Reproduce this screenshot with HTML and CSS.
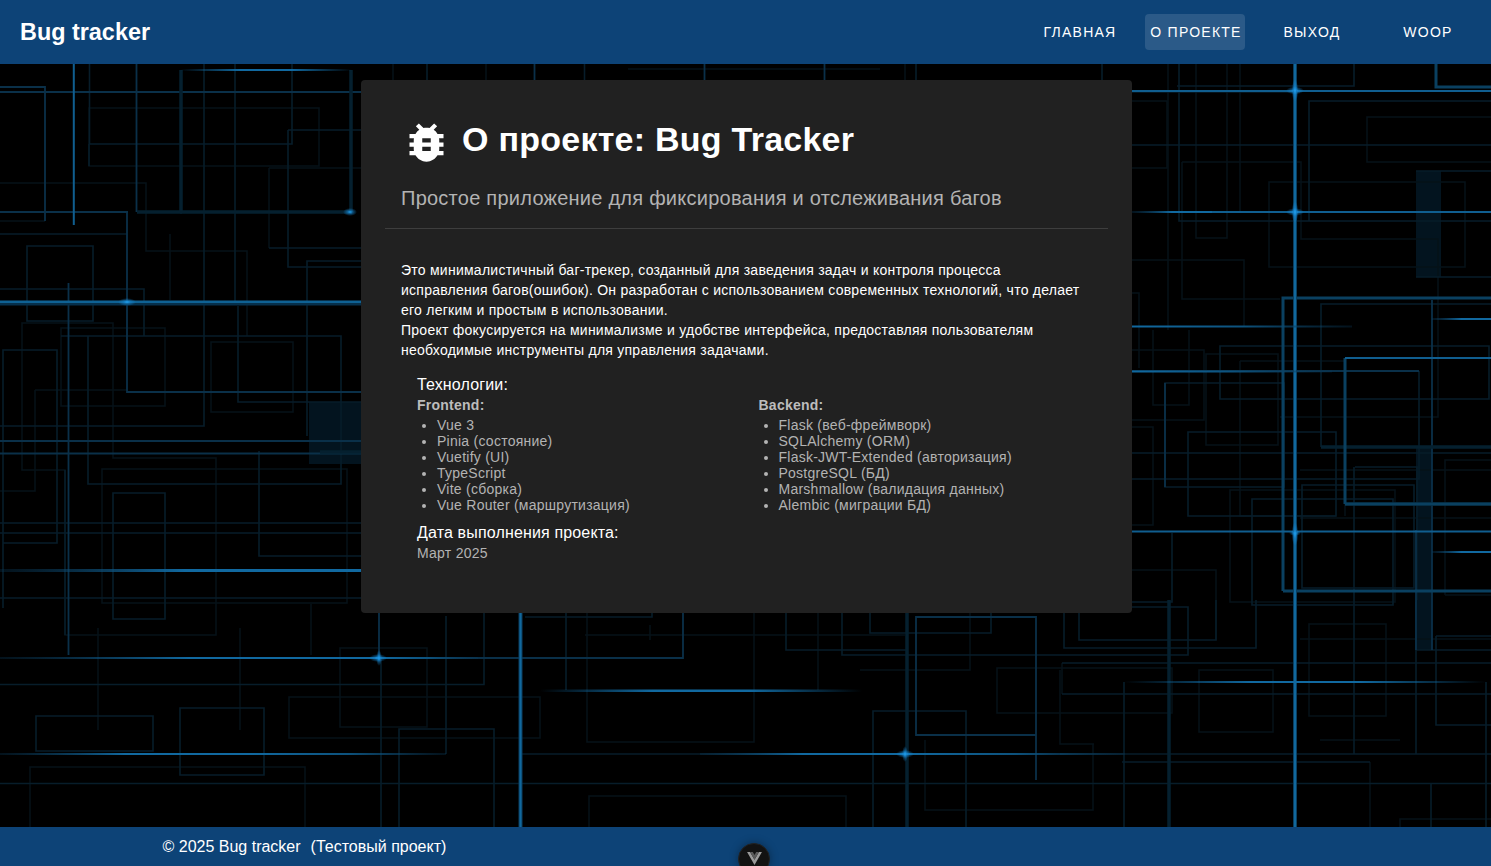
FILE: index.html
```html
<!DOCTYPE html>
<html lang="ru">
<head>
<meta charset="utf-8">
<title>Bug tracker</title>
<link rel="stylesheet" href="styles.css">
</head>
<body>
<div class="app">
<svg class="backdrop" viewBox="0 0 1491 866" preserveAspectRatio="none" aria-hidden="true">
  <defs>
    <linearGradient id="fadeBoth"><stop offset="0" stop-color="#0f6ca6" stop-opacity="0"/><stop offset=".35" stop-color="#1169a0"/><stop offset=".65" stop-color="#1169a0"/><stop offset="1" stop-color="#0f6ca6" stop-opacity="0"/></linearGradient>
    <linearGradient id="fadeIn"><stop offset="0" stop-color="#0b3c5c" stop-opacity=".3"/><stop offset=".5" stop-color="#1169a0"/><stop offset="1" stop-color="#1169a0"/></linearGradient>
    <linearGradient id="fadeOut"><stop offset="0" stop-color="#1169a0"/><stop offset=".5" stop-color="#0d527d"/><stop offset="1" stop-color="#0b3c5c" stop-opacity=".3"/></linearGradient>
    <radialGradient id="spark"><stop offset="0" stop-color="#22a4f4"/><stop offset=".4" stop-color="#1583cc" stop-opacity=".6"/><stop offset="1" stop-color="#1583cc" stop-opacity="0"/></radialGradient>
  </defs>

  <g class="block">
    <path d="M309 402h60v62h-60zM1416 171h25v106h-25zM1416 446h16v204h-16z"/>
  </g>

  <g class="trace faint">
    <path d="M89 108H319V166H89zM0 183H146V251H247V336M22 323H113V458H216V635H65V470H22zM61 328H165V406H61zM211 342H293V412H211z"/>
    <path d="M0 221H45M269 168H370M269 168V248M102 469H347V603H102zM340 648H427V727H340zM289 697H540V738H289zM30 827V767H305V827M311 604V655M35 390V491H0M35 390H127M170 234V300M98 628V730M240 628V730"/>
    <path d="M587 613V742H754V613M585 635H905M589 827V796H846V827M818 613V690M997 668H1172V713H997zM1199 670H1273V732H1199zM1309 624H1386V716H1309zM1300 639H1491M1400 827V819H1491M1062 663V694M1370 762V827"/>
    <path d="M1132 101H1167V168H1132M1269 182H1465V267H1269zM1132 260H1244V326M1196 64V238H1227V64M1240 64V212M1367 117H1500V162H1367zM1182 162H1301V239H1438V417H1280M1182 162V299H1280"/>
    <path d="M1132 350H1204V420H1132M1206 354H1278V445H1206zM1153 330V405H1189V330M1240 361H1345V516M1240 361V516H1336M1132 427H1153V525H1132M1230 490H1395V602H1230zM1132 570H1216V640M1445 595V460H1491M1445 595H1491M1139 368V293H1132M1300 470H1491M1300 518H1491"/>
    <path d="M650 625V640M860 670H970V613M1094 744H1060V670M1093 744V810H925V740M1168 64V330M1320 740H1400M393 64V82M486 64V82M905 64V82M628 69H880"/>
  </g>

  <g class="trace dim">
    <path d="M89.500 64V144H292V64M89 144V166M181 70V214M351 70V214M204 64V426H0M235 64V302M288 130H370M288 130V248M269 248H370M288 248V267H370M0 234H127M27 246H93V321H27zM0 289H144V336H61M307 436V261H370M88 336H341V484H88zM238 306V402H370M3 350H57V543H3zM3 543V608"/>
    <path d="M113 493H165V619H113zM259 451V556H370M0 523H370M0 533H370M0 598H370M0 684.500H484V613M36 716H153V751H36zM180 708H264V775H180zM0 783.500H1491M65 470V635"/>
    <path d="M446 616V754M381 660V827M399 827V729H494V827M566 613V690M525 617H652V613M786 613V650H906M842 613V655H1188V607H1132M870 613V633H991V613M873 827V711H966V827M520 754H905M1062 663H1491M1062 694H1491M1064 613V648H1256V600M1079 613V640H1216V600"/>
    <path d="M1124 682V827M1486 682V827M1122 762H1370M1354 467V754M1416 602V754M1436 636H1491M1436 636V725H1491M1416 650H1491M1431 783V827M1060 754H1491"/>
    <path d="M1177 86H1354V64M1179 64V221H1491M1132 145H1491M1309 221V101H1491M1416 171H1491M1416 277H1491M1321 447V304H1491M1321 447H1491M1220 346H1489V399H1220zM1165 383H1284V487H1165zM1188 432H1336V516H1188zM1132 453H1491M1132 479H1419V371M1302 485H1414V588H1302zM1252 499H1393V605H1252zM1355 467H1417V600M1172 533V602H1132"/>
    <path d="M427 64V82M584.500 64V82M916 64V82M1102 64V82M1132 92H1300"/>
  </g>

  <g class="trace mid">
    <path d="M0 87H45V221M0 92H370M136.500 64V212M0 212H128M127 212V392H370M68.500 283V655M0 441H370M0 453.500H370M379 613V660M378 658H683V613M916 617H1036V735H916zM1036 735V780M1132 371H1419M1432 300V650M1165 383V487M1416 530V650M534.500 64V82M704.500 64V82M824.500 64V82"/>
  </g>
  <g class="trace wide">
    <path d="M137 212H351M181 70V212M351 70V212M907 613V827M1169 600V827M1345 504H1491M320 452H370M1321 447H1491"/>
  </g>
  <g class="trace strong">
    <path d="M1283 591V298H1491M1283 591H1491M1345 504V358M1345 504H1491M1436 64V87H1491"/>
  </g>
  <g class="trace bright">
    <path d="M73.800 64V225M1132 91H1491M1200 212H1491M1132 531.500H1491M1345 358H1491"/>
  </g>
  <path class="beam" d="M520.500 613V827M1295 64V827"/>
  <path class="beam beam-core" d="M520.500 613V827M1295 64V827"/>
  <path class="under" d="M0 304H370"/>
  <g>
    <rect x="180" y="69" width="172" height="2" fill="url(#fadeBoth)"/>
    <rect x="0" y="300.500" width="370" height="2.500" fill="#0f6193"/>
    <rect x="0" y="569" width="370" height="3" fill="url(#fadeIn)"/>
    <rect x="0" y="657" width="378" height="2" fill="url(#fadeIn)"/>
    <rect x="378" y="657" width="100" height="2" fill="url(#fadeOut)"/>
    <rect x="0" y="753" width="250" height="2" fill="url(#fadeIn)"/>
    <rect x="250" y="753" width="196" height="2" fill="url(#fadeOut)"/>
    <rect x="540" y="689.500" width="322" height="2.500" fill="url(#fadeBoth)"/>
    <rect x="700" y="753" width="205" height="2" fill="url(#fadeIn)"/>
    <rect x="905" y="753" width="220" height="2" fill="url(#fadeOut)"/>
    <rect x="1124" y="681" width="362" height="2" fill="url(#fadeBoth)"/>
    <rect x="1132" y="211" width="80" height="2" fill="url(#fadeIn)"/>
    <rect x="1132" y="325.500" width="220" height="2" fill="url(#fadeOut)"/>
    <rect x="1132" y="370.500" width="200" height="2" fill="url(#fadeOut)"/>
    <rect x="1432" y="318" width="59" height="2" fill="url(#fadeIn)"/>
    <rect x="1432" y="551" width="59" height="2" fill="url(#fadeIn)"/>
  </g>
  <g fill="url(#spark)">
    <ellipse cx="127" cy="302" rx="9" ry="4"/><ellipse cx="350" cy="212" rx="7" ry="4"/><ellipse cx="378" cy="658" rx="9" ry="4"/><ellipse cx="379" cy="658" rx="3" ry="8"/><ellipse cx="905" cy="754" rx="9" ry="4"/><ellipse cx="905" cy="754" rx="3" ry="8"/><ellipse cx="1295" cy="90.500" rx="9" ry="4"/><ellipse cx="1295" cy="90.500" rx="3.500" ry="11"/><ellipse cx="1295" cy="212" rx="9" ry="4"/><ellipse cx="1295" cy="212" rx="3.500" ry="11"/><ellipse cx="1295" cy="533" rx="6" ry="3"/><ellipse cx="1295" cy="534" rx="3.500" ry="12"/>
  </g>
</svg>

<header class="bar">
  <div class="brand">Bug tracker</div>
  <nav class="nav">
    <a class="nav-item">Главная</a>
    <a class="nav-item active">О проекте</a>
    <a class="nav-item">Выход</a>
    <a class="nav-item">woop</a>
  </nav>
</header>

<main class="main">
  <article class="card">
    <h1 class="title">
      <svg class="bug" viewBox="0 0 24 24" aria-hidden="true"><path d="M14,12H10V10H14M14,16H10V14H14M20,8H17.190C16.740,7.220 16.120,6.550 15.370,6.040L17,4.410L15.590,3L13.420,5.170C12.960,5.060 12.500,5 12,5C11.500,5 11.050,5.060 10.590,5.170L8.410,3L7,4.410L8.620,6.040C7.880,6.550 7.260,7.220 6.810,8H4V10H6.090C6.040,10.330 6,10.660 6,11V12H4V14H6V15C6,15.340 6.040,15.670 6.090,16H4V18H6.810C7.850,19.790 9.780,21 12,21C14.220,21 16.150,19.790 17.190,18H20V16H17.910C17.960,15.670 18,15.340 18,15V14H20V12H18V11C18,10.660 17.960,10.330 17.910,10H20V8Z"/></svg>
      <span>О проекте: Bug Tracker</span>
    </h1>
    <p class="subtitle">Простое приложение для фиксирования и отслеживания багов</p>
    <hr class="divider">
    <div class="about">
      <p>Это минималистичный баг-трекер, созданный для заведения задач и контроля процесса<br>исправления багов(ошибок). Он разработан с использованием современных технологий, что делает<br>его легким и простым в использовании.</p>
      <p>Проект фокусируется на минимализме и удобстве интерфейса, предоставляя пользователям<br>необходимые инструменты для управления задачами.</p>
    </div>
    <section class="item">
      <h2 class="item-title">Технологии:</h2>
      <div class="columns">
        <div>
          <h3 class="list-title">Frontend:</h3>
          <ul class="list">
            <li>Vue 3</li><li>Pinia (состояние)</li><li>Vuetify (UI)</li><li>TypeScript</li><li>Vite (сборка)</li><li>Vue Router (маршрутизация)</li>
          </ul>
        </div>
        <div>
          <h3 class="list-title">Backend:</h3>
          <ul class="list">
            <li>Flask (веб-фреймворк)</li><li>SQLAlchemy (ORM)</li><li>Flask-JWT-Extended (авторизация)</li><li>PostgreSQL (БД)</li><li>Marshmallow (валидация данных)</li><li>Alembic (миграции БД)</li>
          </ul>
        </div>
      </div>
    </section>
    <section class="item item-date">
      <h2 class="item-title">Дата выполнения проекта:</h2>
      <p class="date">Март 2025</p>
    </section>
  </article>
</main>

<footer class="footer">
  <span>© 2025 Bug tracker</span>
  <span>(Тестовый проект)</span>
</footer>

<div class="devtools">
  <svg class="devtools-logo" viewBox="0 0 16 14" aria-hidden="true"><path fill="#9a9a9a" d="M0 0h3.200L8 8.400 12.800 0H16L8 14z"/><path fill="#5a5a5a" d="M3.200 0H6.200L8 3.200 9.800 0h3L8 8.400z"/></svg>
</div>
</div>
</body>
</html>
```
FILE: styles.css
```css
* { box-sizing: border-box; margin: 0; padding: 0; }

body {
  background: #000;
  color: #fff;
  font-family: "Liberation Sans", Arial, sans-serif;
  font-size: 16px;
}

.app {
  position: relative;
  display: flex;
  flex-direction: column;
  height: 866px;
  overflow: hidden;
}

.backdrop { position: absolute; inset: 0; width: 100%; height: 100%; }
.block { fill: #03141f; }
.trace { fill: none; }
.faint { stroke: #061219; stroke-width: 1.5; }
.dim { stroke: #071d2a; stroke-width: 1.6; }
.mid { stroke: #0a3049; stroke-width: 1.8; }
.wide { stroke: #05202f; stroke-width: 3.5; }
.strong { stroke: #0a4060; stroke-width: 3; }
.bright { stroke: #105e8f; stroke-width: 2; }
.beam { fill: none; stroke: #0b3f60; stroke-width: 4; }
.beam-core { stroke: #11689d; stroke-width: 2; }
.under { stroke: #062f4a; stroke-width: 3; }

.bar {
  position: relative;
  display: flex;
  align-items: center;
  justify-content: space-between;
  height: 64px;
  padding: 0 14px 0 20px;
  background: #0d4377;
}
.brand { font-size: 23.4px; font-weight: 700; line-height: 32px; }
.nav { display: flex; gap: 16px; }
.nav-item {
  width: 100px;
  height: 36px;
  padding-left: 2px;
  border-radius: 4px;
  font-size: 14px;
  line-height: 36px;
  letter-spacing: 1.25px;
  text-align: center;
  text-transform: uppercase;
  white-space: nowrap;
}
.active { background: #2b5a88; }

.main { position: relative; flex: 1; padding: 16px 359px 0 361px; }
.card {
  height: 533px;
  padding: 24px;
  border-radius: 4px;
  background: #212121;
}
.title {
  display: flex;
  align-items: center;
  gap: 10px;
  height: 72px;
  padding: 0 16px;
  font-size: 34px;
  font-weight: 700;
  line-height: 40px;
  letter-spacing: 0.25px;
}
.title span { padding-bottom: 2px; }
.bug { width: 51px; height: 51px; margin-top: 5px; fill: #fff; }
.subtitle {
  padding: 6px 16px 14px;
  font-size: 20px;
  line-height: 32px;
  letter-spacing: 0.25px;
  color: #b3b3b3;
}
.divider { height: 1px; border: 0; background: #3e3e3e; }
.about {
  padding: 31px 16px 0;
  font-size: 14px;
  line-height: 20px;
  letter-spacing: 0.25px;
  white-space: nowrap;
}
.item { padding: 14px 32px 0; }
.item-date { padding-top: 9px; }
.item-title { font-size: 16px; font-weight: 400; line-height: 22px; letter-spacing: 0.15px; }
.columns { display: grid; grid-template-columns: 1fr 1fr; gap: 24px; }
.list-title { font-size: 14px; line-height: 18px; letter-spacing: 0.25px; color: #bcbcbc; }
.list {
  margin-top: 3px;
  padding-left: 20px;
  font-size: 14px;
  line-height: 16px;
  letter-spacing: 0.25px;
  color: #b3b3b3;
}
.date { font-size: 14px; line-height: 18px; letter-spacing: 0.25px; color: #b3b3b3; }

.footer {
  position: relative;
  display: flex;
  align-items: center;
  gap: 10px;
  height: 39px;
  padding-left: 162.5px;
  background: #0d4377;
}
.devtools {
  position: absolute;
  left: 738px;
  top: 843px;
  display: flex;
  justify-content: center;
  width: 32px;
  height: 32px;
  padding-top: 8px;
  border: 1px solid #222;
  border-radius: 50%;
  background: #121212;
  box-shadow: 0 0 8px rgba(0, 0, 0, 0.35);
}
.devtools-logo { width: 15px; height: 13px; }
```
